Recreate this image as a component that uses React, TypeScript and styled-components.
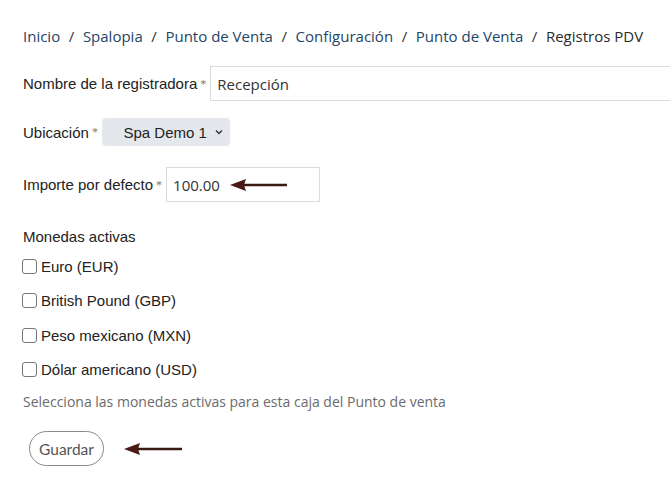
import React from 'react';
import styled, { createGlobalStyle } from 'styled-components';

const GlobalStyle = createGlobalStyle`
  html, body {
    margin: 0;
    padding: 0;
    background: #fff;
    overflow: hidden;
  }
`;

const Page = styled.div`
  width: 670px;
  height: 489px;
  padding: 26px 0 0 23px;
  box-sizing: border-box;
  overflow: hidden;
`;

const Breadcrumb = styled.nav`
  display: flex;
  align-items: center;
  gap: 8.6px;
  font-family: 'Open Sans', sans-serif;
  font-size: 15px;
  line-height: 20px;
  white-space: nowrap;
`;

const Crumb = styled.span<{ $current?: boolean }>`
  color: ${p => (p.$current ? '#2b2b2b' : '#1f4566')};
`;

const Sep = styled.span`
  color: #333;
`;

const Form = styled.form`
  display: flex;
  flex-direction: column;
  margin-top: 20px;
`;

const Row = styled.div<{ $mt?: number }>`
  display: flex;
  align-items: center;
  margin-top: ${p => p.$mt ?? 0}px;
`;

const Label = styled.label`
  font-family: 'Liberation Sans', Arial, sans-serif;
  font-size: 15px;
  color: #222;
  white-space: nowrap;
`;

const Req = styled.sup`
  font-size: 12px;
  color: #777;
  margin: 0 4px 0 3px;
  vertical-align: 3px;
  line-height: 0;
`;

const TextInput = styled.div<{ $w: number }>`
  width: ${p => p.$w}px;
  height: 35px;
  box-sizing: border-box;
  border: 1px solid #dcdcdc;
  display: flex;
  align-items: center;
  padding-left: 6px;
  gap: 10px;
  font-family: 'Open Sans', sans-serif;
  font-size: 15px;
  color: #333;
  flex-shrink: 0;
`;

const Select = styled.div`
  width: 128px;
  height: 28px;
  box-sizing: border-box;
  background: #e4e7eb;
  border-radius: 4px;
  display: flex;
  align-items: center;
  justify-content: flex-end;
  padding-right: 6px;
  gap: 7px;
  font-family: 'Liberation Sans', Arial, sans-serif;
  font-size: 15px;
  color: #222;
`;

const SectionTitle = styled.div`
  font-family: 'Liberation Sans', Arial, sans-serif;
  font-size: 15px;
  color: #222;
  margin-top: 25.5px;
`;

const CheckList = styled.div`
  display: flex;
  flex-direction: column;
  gap: 14.3px;
  margin-top: 12px;
  margin-left: -1px;
`;

const CheckRow = styled.label`
  display: flex;
  align-items: center;
  gap: 4px;
  font-family: 'Liberation Sans', Arial, sans-serif;
  font-size: 15px;
  color: #222;
  height: 20px;
`;

const Box = styled.span`
  width: 13px;
  height: 13px;
  border: 1px solid #767676;
  border-radius: 3px;
  background: #fff;
  display: inline-block;
`;

const Help = styled.div`
  font-family: 'Open Sans', sans-serif;
  font-size: 14px;
  color: #6b6b6b;
  margin-top: 13px;
`;

const ButtonRow = styled.div`
  display: flex;
  align-items: center;
  gap: 20px;
  margin-top: 20px;
  margin-left: 6px;
`;

const Button = styled.button`
  width: 75px;
  height: 35px;
  border: 1px solid #8a8a8a;
  border-radius: 18px;
  background: #fff;
  font-family: 'Lato', 'Open Sans', sans-serif;
  font-size: 15.5px;
  color: #555;
  padding: 0;
`;

const Arrow: React.FC<{ width: number }> = ({ width }) => (
  <svg width={width} height="14" viewBox={`0 0 ${width} 14`}>
    <line x1="14" y1="7" x2={width} y2="7" stroke="#3a1a14" strokeWidth="2.5" />
    <polygon points="0,7 16,1 14,7 16,13" fill="#4a1a14" />
  </svg>
);

const Chevron = () => (
  <svg width="10" height="10" viewBox="0 0 10 10">
    <path d="M2 3.5 L5 6.5 L8 3.5" fill="none" stroke="#333" strokeWidth="1.4" />
  </svg>
);

const currencies = ['Euro (EUR)', 'British Pound (GBP)', 'Peso mexicano (MXN)', 'Dólar americano (USD)'];

export default function App() {
  return (
    <>
      <GlobalStyle />
      <Page>
        <Breadcrumb>
          <Crumb>Inicio</Crumb>
          <Sep>/</Sep>
          <Crumb>Spalopia</Crumb>
          <Sep>/</Sep>
          <Crumb>Punto de Venta</Crumb>
          <Sep>/</Sep>
          <Crumb>Configuración</Crumb>
          <Sep>/</Sep>
          <Crumb>Punto de Venta</Crumb>
          <Sep>/</Sep>
          <Crumb $current>Registros PDV</Crumb>
        </Breadcrumb>
        <Form>
          <Row>
            <Label>Nombre de la registradora</Label>
            <Req>*</Req>
            <TextInput $w={480}>Recepción</TextInput>
          </Row>
          <Row $mt={17}>
            <Label>Ubicación</Label>
            <Req>*</Req>
            <Select>
              Spa Demo 1
              <Chevron />
            </Select>
          </Row>
          <Row $mt={21}>
            <Label>Importe por defecto</Label>
            <Req>*</Req>
            <TextInput $w={154}>
              100.00
              <Arrow width={57} />
            </TextInput>
          </Row>
          <SectionTitle>Monedas activas</SectionTitle>
          <CheckList>
            {currencies.map(c => (
              <CheckRow key={c}>
                <Box />
                {c}
              </CheckRow>
            ))}
          </CheckList>
          <Help>Selecciona las monedas activas para esta caja del Punto de venta</Help>
          <ButtonRow>
            <Button type="button">Guardar</Button>
            <Arrow width={58} />
          </ButtonRow>
        </Form>
      </Page>
    </>
  );
}
